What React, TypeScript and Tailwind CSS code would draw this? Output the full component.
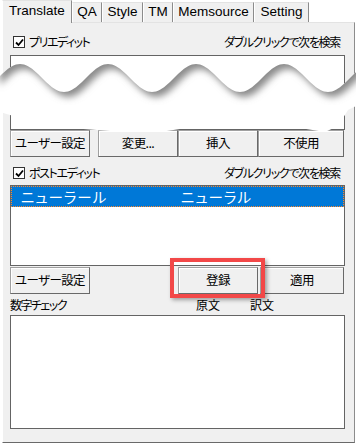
import React from "react";

const jp = "font-['Meiryo_UI','Noto_Sans_CJK_JP',sans-serif] [font-feature-settings:'palt']";

function CheckBox() {
  return (
    <span className="w-[12px] h-[12px] border border-[#333] bg-white flex items-center justify-center shrink-0">
      <svg width="9" height="9" viewBox="0 0 9 9">
        <path d="M1 4.5 L3.5 7 L8 1.5" stroke="#000" strokeWidth="1.8" fill="none" />
      </svg>
    </span>
  );
}

function Btn({ children, className = "" }: { children: React.ReactNode; className?: string }) {
  return (
    <div
      className={
        "h-[27px] flex items-center justify-center bg-[#f0f0f0] border border-[#a0a0a0] border-r-[#696969] border-b-[#696969] shadow-[inset_1px_1px_0_#ffffff] text-[12.5px] tracking-[-0.6px] text-black " +
        jp +
        " " +
        className
      }
    >
      {children}
    </div>
  );
}

function Tab({ label, active, className = "" }: { label: string; active?: boolean; className?: string }) {
  return (
    <div
      className={
        "flex items-center justify-center font-['Liberation_Sans',Arial,sans-serif] text-[13.5px] text-black border-l border-t border-l-white border-t-[#e3e3e3] border-r border-r-[#8c8c8c] " +
        (active ? "h-[23px] bg-[#f0f0f0] relative z-10 -mb-[1px] pb-[2px]" : "h-[20px] bg-[#f0f0f0]") +
        " " +
        className
      }
    >
      {label}
    </div>
  );
}

function Wave() {
  const top: string[] = [];
  for (let x = -4; x <= 360; x += 2) {
    const y = 78 - 14 * Math.cos((2 * Math.PI * (x - 20)) / 88);
    top.push(`${x},${y.toFixed(2)}`);
  }
  const knots: [number, number][] = [
    [-4, 110],
    [0, 112],
    [20, 118],
    [45, 126],
    [70, 128],
    [110, 131],
    [160, 132],
    [180, 129],
    [220, 127],
    [260, 127],
    [300, 128],
    [325, 132],
    [338, 126],
    [348, 110],
    [360, 104],
  ];
  const bottom = knots
    .slice()
    .reverse()
    .map(([x, y]) => `${x},${y}`);
  const region = `M ${top.join(" L ")} L ${bottom.join(" L ")} Z`;
  const above = `M ${top.join(" L ")} L 360,-10 L -4,-10 Z`;
  return (
    <svg className="absolute left-0 top-0 pointer-events-none" width="356" height="443" viewBox="0 0 356 443">
      <defs>
        <clipPath id="wclip">
          <path d={region} />
        </clipPath>
        <filter id="wblur" x="-10%" y="-10%" width="120%" height="130%">
          <feGaussianBlur stdDeviation="3.5" />
        </filter>
      </defs>
      <path d={region} fill="#ffffff" />
      <g clipPath="url(#wclip)">
        <path d={above} fill="#8a8a8a" transform="translate(4,5)" filter="url(#wblur)" />
      </g>
    </svg>
  );
}

export default function App() {
  return (
    <div className="w-[356px] h-[443px] bg-white relative overflow-hidden">
      {/* tabs */}
      <div className="h-[22px] flex items-end pl-[2px]">
        <Tab label="Translate" active className="w-[70px]" />
        <Tab label="QA" className="w-[30px]" />
        <Tab label="Style" className="w-[41px]" />
        <Tab label="TM" className="w-[30px]" />
        <Tab label="Memsource" className="w-[81px]" />
        <Tab label="Setting" className="w-[55px]" />
      </div>
      {/* panel */}
      <div className="ml-[2px] w-[353px] h-[421px] bg-[#f0f0f0] border border-l-white border-t-[#e3e3e3] border-r-[#8c8c8c] border-b-[#696969] pl-[7px] pr-[9px] pt-[11px] flex flex-col">
        <div className={"h-[16px] flex items-center pl-[3px] pr-[5px] text-[12px] text-black " + jp}>
          <CheckBox />
          <span className="ml-[4px] tracking-[-1.5px]">プリエディット</span>
          <span className="ml-auto tracking-[-1.3px]">ダブルクリックで次を検索</span>
        </div>
        <div className="mt-[5px] h-[75px] bg-white border border-[#646464]" />
        <div className="flex">
          <Btn className="w-[80px]">ユーザー設定</Btn>
          <Btn className="w-[80px] ml-[8px]">変更...</Btn>
          <Btn className="w-[80px]">挿入</Btn>
          <Btn className="w-[86px]">不使用</Btn>
        </div>
        <div className={"mt-[8px] h-[16px] flex items-center pl-[3px] pr-[5px] text-[12px] text-black " + jp}>
          <CheckBox />
          <span className="ml-[4px] tracking-[-1.4px]">ポストエディット</span>
          <span className="ml-auto tracking-[-1.3px]">ダブルクリックで次を検索</span>
        </div>
        <div className="mt-[4px] h-[81px] bg-white border border-[#646464] flex flex-col">
          <div className={"h-[21px] bg-[#0078d7] border border-dotted border-[#ff8728] flex items-center text-white text-[14.5px] " + jp}>
            <span className="ml-[9px] w-[160px] tracking-[1px]">ニューラール</span>
            <span className="tracking-[1px]">ニューラル</span>
          </div>
        </div>
        <div className="mt-[1px] flex">
          <Btn className="w-[80px]">ユーザー設定</Btn>
          <Btn className="w-[80px] ml-[88px]">登録</Btn>
          <Btn className="w-[84px] ml-[2px]">適用</Btn>
        </div>
        <div className={"mt-[3px] h-[16px] flex items-center text-[12px] text-black " + jp}>
          <span className="w-[186px] tracking-[-1.5px]">数字チェック</span>
          <span className="w-[54px]">原文</span>
          <span>訳文</span>
        </div>
        <div className="mt-[2px] h-[114px] bg-white border border-[#646464]" />
      </div>
      <Wave />
      {/* highlight annotation */}
      <div className="absolute left-[170px] top-[258px] w-[95px] h-[40px] border-[4px] border-[#f24848] shadow-[2px_2px_4px_rgba(0,0,0,0.35)]" />
    </div>
  );
}
